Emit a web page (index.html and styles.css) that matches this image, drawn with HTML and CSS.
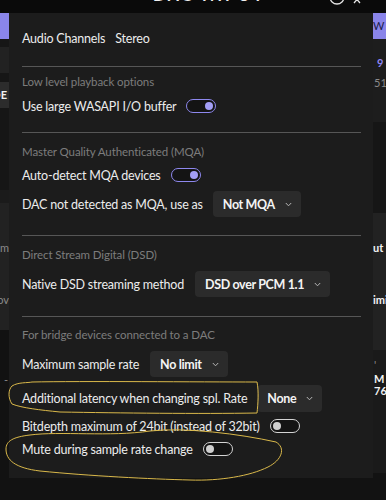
FILE: index.html
```html
<!DOCTYPE html>
<html>
<head>
<meta charset="utf-8">
<link rel="stylesheet" href="styles.css">
</head>
<body>
<div class="screen">
  <div class="titlebar">
    <span class="title">DAC INPUT</span>
    <svg class="tb-icons" width="40" height="13" viewBox="0 0 40 13">
      <circle cx="10" cy="-3" r="7" fill="none" stroke="#e6e6e6" stroke-width="1.3"/>
      <path d="M27 -4 L33 3 M33 -4 L27 3" stroke="#e6e6e6" stroke-width="1.3" fill="none"/>
    </svg>
  </div>
  <div class="main">
    <div class="side side-left">
      <div class="blk purple" style="height:26px"></div>
      <div class="blk dk" style="height:8px"></div>
      <div class="blk g1" style="height:26px"></div>
      <div class="blk dk" style="height:9px"></div>
      <div class="blk g2 txt-end" style="height:26px"><span class="frag bold">DE</span></div>
      <div class="blk dk" style="height:82px"></div>
      <div class="blk g0" style="height:13px"></div>
      <div class="blk g1 col-end" style="height:127px"><span class="frag gray f1">m</span><span class="frag gray f2">ov</span></div>
      <div class="blk bottom txt-end" style="height:173px"><span class="frag gray f3">-</span></div>
    </div>
    <div class="dialog">
      <div class="row first"><span class="label">Audio Channels</span><span class="label">Stereo</span></div>
      <div class="divider d1"></div>
      <div class="header h1">Low level playback options</div>
      <div class="row r-a"><span class="label">Use large WASAPI I/O buffer</span><span class="toggle on"><span class="knob"></span></span></div>
      <div class="divider d2"></div>
      <div class="header h2">Master Quality Authenticated (MQA)</div>
      <div class="row r-b"><span class="label">Auto-detect MQA devices</span><span class="toggle on"><span class="knob"></span></span></div>
      <div class="row r-c"><span class="label">DAC not detected as MQA, use as</span><span class="dropdown">Not MQA<svg class="chev" width="7" height="5" viewBox="0 0 7 5"><path d="M0.8 1 L3.5 3.8 L6.2 1" fill="none" stroke="#b5b5b5" stroke-width="1"/></svg></span></div>
      <div class="divider d3"></div>
      <div class="header h3">Direct Stream Digital (DSD)</div>
      <div class="row r-d"><span class="label">Native DSD streaming method</span><span class="dropdown">DSD over PCM 1.1<svg class="chev" width="7" height="5" viewBox="0 0 7 5"><path d="M0.8 1 L3.5 3.8 L6.2 1" fill="none" stroke="#b5b5b5" stroke-width="1"/></svg></span></div>
      <div class="divider d4"></div>
      <div class="header h4">For bridge devices connected to a DAC</div>
      <div class="row r-e"><span class="label">Maximum sample rate</span><span class="dropdown">No limit<svg class="chev" width="7" height="5" viewBox="0 0 7 5"><path d="M0.8 1 L3.5 3.8 L6.2 1" fill="none" stroke="#b5b5b5" stroke-width="1"/></svg></span></div>
      <div class="row r-f"><span class="label">Additional latency when changing spl. Rate</span><span class="dropdown">None<svg class="chev" width="7" height="5" viewBox="0 0 7 5"><path d="M0.8 1 L3.5 3.8 L6.2 1" fill="none" stroke="#b5b5b5" stroke-width="1"/></svg></span></div>
      <div class="row r-g"><span class="label">Bitdepth maximum of 24bit (instead of 32bit)</span><span class="toggle off"><span class="knob"></span></span></div>
      <div class="row r-h"><span class="label">Mute during sample rate change</span><span class="toggle off"><span class="knob"></span></span></div>
    </div>
    <div class="side side-right">
      <div class="blk purple" style="height:26px"><span class="frag navy">W C</span></div>
      <div class="blk r1 col-start" style="height:83px"><span class="frag blue r-9">9</span><span class="frag gray r-51">51</span></div>
      <div class="blk r2" style="height:91px"></div>
      <div class="blk g1 col-start" style="height:137px"><span class="frag bold r-ut">ut</span><span class="frag bold r-imi">imi</span></div>
      <div class="blk r3 col-start" style="height:123px"><span class="frag gray r-q">'</span><span class="frag bold r-m">M</span><span class="frag bold r-76">76</span></div>
      <div class="blk bottom" style="height:27px"></div>
    </div>
  </div>
  <svg class="annot" width="386" height="500" viewBox="0 0 386 500">
    <path d="M12 386 C 18 382, 28 383, 32 382 C 80 381, 200 382, 257 382 C 259 392, 258 404, 257 413 C 200 414, 120 413, 60 412 C 40 410, 22 408, 12 404 C 8 398, 8 390, 12 386 Z" fill="none" stroke="#d9b84a" stroke-width="1"/>
    <path d="M30 435 C 60 431, 110 437, 150 431 C 185 427, 240 434, 276 442 C 286 448, 282 460, 268 467 C 250 476, 220 481, 190 480 C 150 479, 90 476, 40 471 C 15 468, 6 460, 6 449 C 6 441, 13 437, 30 435 Z" fill="none" stroke="#d9b84a" stroke-width="1"/>
  </svg>
</div>
</body>
</html>
```
FILE: styles.css
```css
* { box-sizing: border-box; }
html, body { margin: 0; padding: 0; }
body {
  background: #121212;
  font-family: "Lato", "Noto Sans", sans-serif;
  color: #ececec;
  width: 386px;
  height: 500px;
  overflow: hidden;
}
.screen { position: relative; width: 386px; height: 500px; background: #121212; }
.titlebar {
  height: 13px;
  background: #0a0a0a;
  position: relative;
  overflow: hidden;
  display: flex;
  justify-content: flex-start;
  align-items: flex-start;
}
.title {
  margin-left: 153px;
  margin-top: -13px;
  font-weight: 700;
  font-size: 16px;
  letter-spacing: 3px;
  line-height: 16px;
  color: #f0f0f0;
  white-space: nowrap;
}
.tb-icons { position: absolute; left: 327px; top: 0; }
.main { display: flex; height: 487px; }
.side { display: flex; flex-direction: column; overflow: hidden; }
.side-left { width: 9px; }
.side-right { width: 13px; }
.blk { flex: none; display: flex; position: relative; overflow: hidden; }
.purple { background: #8a85ea; }
.dk { background: #161616; }
.g0 { background: #1b1b1b; }
.g1 { background: #222222; }
.g2 { background: #2c2c2c; }
.r1 { background: #1d1d1d; }
.r2 { background: #161616; }
.r3 { background: #1a1a1a; }
.bottom { background: #121212; }
.txt-end { justify-content: flex-end; }
.frag { font-size: 11px; line-height: 12px; white-space: nowrap; }
.bold { font-weight: 700; color: #f2f2f2; }
.gray { color: #8a8a8a; }
.blue { color: #8d86f2; }
.navy { color: #1c1c4a; font-size: 11px; }
.side-left .g2 .frag { align-self: center; margin-right: 2px; }
.col-end { flex-direction: column; align-items: flex-end; }
.col-start { flex-direction: column; align-items: flex-start; }
.f1 { margin-top: 39px; }
.f2 { margin-top: 40px; }
.f3 { margin-top: 44px; margin-right: 1px; }
.side-right .purple .frag { align-self: center; }
.r-9 { margin-top: 18px; margin-left: 4px; font-weight: 700; }
.r-51 { margin-top: 8px; margin-left: 1px; }
.r-ut { margin-top: 29px; margin-left: 0; }
.r-imi { margin-top: 40px; }
.r-q { margin-top: 12px; margin-left: 1px; line-height: 6px; }
.r-m { margin-top: 5px; margin-left: 1px; }
.r-76 { margin-top: 0; margin-left: 1px; }

.dialog {
  width: 364px;
  height: 465px;
  background: #1c1c1c;
  padding: 13px 12px 0 13px;
  display: flex;
  flex-direction: column;
}
.row { display: flex; align-items: center; flex: none; }
.label { font-size: 12.5px; letter-spacing: -0.2px; color: #ececec; white-space: nowrap; }
.first { height: 24px; gap: 10px; }
.divider { height: 1px; background: #565656; flex: none; }
.header { font-size: 11.5px; letter-spacing: -0.1px; color: #7c7c7c; height: 16px; line-height: 16px; flex: none; }
.d1 { margin-top: 16px; }
.h1 { margin-top: 7px; }
.r-a { height: 24px; margin-top: 4px; gap: 10px; }
.d2 { margin-top: 14px; }
.h2 { margin-top: 11px; }
.r-b { height: 24px; margin-top: 3px; gap: 10px; }
.r-c { height: 26px; margin-top: 4px; gap: 10px; }
.d3 { margin-top: 18px; }
.h3 { margin-top: 11px; }
.r-d { height: 26px; margin-top: 8px; gap: 11px; }
.d4 { margin-top: 19px; }
.h4 { margin-top: 10px; }
.r-e { height: 26px; margin-top: 8px; gap: 11px; }
.r-f { height: 27px; margin-top: 8px; gap: 10px; }
.r-g { height: 20px; margin-top: 4px; gap: 10px; }
.r-h { height: 20px; margin-top: 3px; gap: 10px; }

.toggle {
  width: 30px;
  height: 14px;
  border-radius: 7px;
  border: 1.5px solid #8e88ee;
  background: #141414;
  display: flex;
  align-items: center;
  padding: 0 2px;
}
.toggle .knob { width: 8px; height: 8px; border-radius: 50%; background: #a39ef6; }
.toggle.on { justify-content: flex-end; }
.toggle.off { border-color: #d4d4d4; justify-content: flex-start; }
.toggle.off .knob { background: #cfcfcf; }

.dropdown {
  height: 100%;
  background: #2b2b2b;
  border-radius: 4px;
  display: flex;
  align-items: center;
  padding: 0 9px 0 10px;
  gap: 10px;
  font-size: 12.5px;
  letter-spacing: -0.35px;
  font-weight: 700;
  color: #f4f4f4;
  white-space: nowrap;
}
.chev { flex: none; }
.annot { position: absolute; left: 0; top: 0; pointer-events: none; }
```
